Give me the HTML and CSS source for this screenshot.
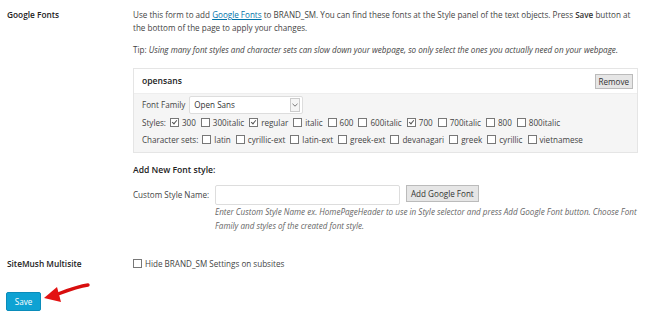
FILE: index.html
```html
<!DOCTYPE html>
<html>
<head>
    <title>Settings</title>
    <link rel="stylesheet" href="styles.css">
</head>
<body>
    <div class="wrap">
        <div class="row">
            <div class="label">Google Fonts</div>
            <div class="field">
                <p class="desc">Use this form to add <a href="#">Google Fonts</a> to BRAND_SM. You can find these fonts at the Style panel of the text objects. Press <b>Save</b> button at<br>the bottom of the page to apply your changes.</p>
                <p class="tip">Tip: <i>Using many font styles and character sets can slow down your webpage, so only select the ones you actually need on your webpage.</i></p>

                <div class="fontbox">
                    <div class="fontbox-head">
                        <span class="fontbox-title">opensans</span>
                        <button class="btn-small">Remove</button>
                    </div>
                    <div class="fontbox-body">
                        <div class="line">
                            <span class="lbl">Font Family</span>
                            <div class="select">
                                <span>Open Sans</span>
                                <span class="select-arrow">
                                    <svg width="6" height="4" viewBox="0 0 6 4"><path d="M0.5 0.8 L3 3.2 L5.5 0.8" fill="none" stroke="#777" stroke-width="1"/></svg>
                                </span>
                            </div>
                        </div>
                        <div class="line opts">
                            <span class="lbl">Styles:</span>
                            <span class="opt"><span class="cb on"></span>300</span>
                            <span class="opt"><span class="cb"></span>300italic</span>
                            <span class="opt"><span class="cb on"></span>regular</span>
                            <span class="opt"><span class="cb"></span>italic</span>
                            <span class="opt"><span class="cb"></span>600</span>
                            <span class="opt"><span class="cb"></span>600italic</span>
                            <span class="opt"><span class="cb on"></span>700</span>
                            <span class="opt"><span class="cb"></span>700italic</span>
                            <span class="opt"><span class="cb"></span>800</span>
                            <span class="opt"><span class="cb"></span>800italic</span>
                        </div>
                        <div class="line opts">
                            <span class="lbl">Character sets:</span>
                            <span class="opt"><span class="cb"></span>latin</span>
                            <span class="opt"><span class="cb"></span>cyrillic-ext</span>
                            <span class="opt"><span class="cb"></span>latin-ext</span>
                            <span class="opt"><span class="cb"></span>greek-ext</span>
                            <span class="opt"><span class="cb"></span>devanagari</span>
                            <span class="opt"><span class="cb"></span>greek</span>
                            <span class="opt"><span class="cb"></span>cyrillic</span>
                            <span class="opt"><span class="cb"></span>vietnamese</span>
                        </div>
                    </div>
                </div>

                <h4 class="subhead">Add New Font style:</h4>
                <div class="addrow">
                    <span class="lbl">Custom Style Name:</span>
                    <div class="addfield">
                        <div class="addinputs">
                            <input type="text" class="text-input">
                            <button class="btn-small btn-add">Add Google Font</button>
                        </div>
                        <p class="help">Enter Custom Style Name ex. HomePageHeader to use in Style selector and press Add Google Font button. Choose Font Family and styles of the created font style.</p>
                    </div>
                </div>
            </div>
        </div>

        <div class="row row-multi">
            <div class="label">SiteMush Multisite</div>
            <div class="field">
                <span class="opt"><span class="cb"></span>Hide BRAND_SM Settings on subsites</span>
            </div>
        </div>

        <div class="submit">
            <button class="btn-save">Save</button>
            <svg class="arrow" width="48" height="24" viewBox="0 0 48 24">
                <path d="M45 4 C37 5 28 8 15 13" fill="none" stroke="#d80e0e" stroke-width="3.4" stroke-linecap="round"/>
                <path d="M1 17 L14 6 L18 21 Z" fill="#e31212"/>
            </svg>
        </div>
    </div>
</body>
</html>
```

FILE: styles.css
```css
body {
    margin: 0;
    padding: 0;
    background: #fff;
    font-family: "Open Sans", "Liberation Sans", sans-serif;
    font-size: 8.1px;
    color: #444;
}

.wrap {
    padding: 9px 0 0 7px;
    position: relative;
}

.row {
    display: flex;
}

.label {
    width: 126px;
    flex: none;
    font-weight: 600;
    color: #222;
    font-size: 8.3px;
}

.field {
    width: 505px;
}

p {
    margin: 0;
}

.desc {
    white-space: nowrap;
    line-height: 12.5px;
}

.desc a {
    color: #0073aa;
}

.desc b {
    font-weight: 600;
    color: #333;
}

.tip {
    margin-top: 10px;
    line-height: 12px;
}

.fontbox {
    margin-top: 12px;
    border: 1px solid #e5e5e5;
}

.fontbox-head {
    display: flex;
    justify-content: space-between;
    align-items: center;
    height: 24px;
    padding: 0 4px 0 8px;
    border-bottom: 1px solid #eee;
}

.fontbox-title {
    font-weight: 600;
    color: #222;
    font-size: 8.6px;
}

.btn-small {
    font-family: "Open Sans", "Liberation Sans", sans-serif;
    font-size: 8.1px;
    color: #333;
    background: #e6e6e6;
    border: 1px solid #bbb;
    padding: 1px 3px;
    line-height: 11px;
}

.fontbox-body {
    background: #f5f5f5;
    padding: 1px 8px 4px;
    white-space: nowrap;
}

.line {
    display: flex;
    align-items: center;
    height: 17px;
}

.line:first-child {
    height: 19px;
}

.lbl {
    margin-right: 4px;
    white-space: nowrap;
}

.select {
    display: flex;
    align-items: center;
    justify-content: space-between;
    width: 108px;
    height: 16px;
    background: #fff;
    border: 1px solid #ddd;
    border-radius: 2px;
    padding-left: 4px;
    color: #333;
}

.select-arrow {
    width: 8px;
    height: 12px;
    margin-right: 2px;
    border: 1px solid #ccc;
    display: flex;
    align-items: center;
    justify-content: center;
    background: #f5f5f5;
}

.opts .lbl {
    margin-right: 4px;
}

.opt {
    display: inline-flex;
    align-items: center;
    margin-right: 5px;
    white-space: nowrap;
}

.cb {
    width: 7px;
    height: 7px;
    border: 1px solid #777;
    margin-right: 3px;
    position: relative;
    background: #fff;
}

.cb.on::after {
    content: "";
    position: absolute;
    left: 2px;
    top: 0;
    width: 2px;
    height: 4px;
    border: solid #555;
    border-width: 0 1px 1px 0;
    transform: rotate(40deg);
}

.subhead {
    margin: 11px 0 0;
    font-size: 8.6px;
    font-weight: 600;
    color: #222;
}

.addrow {
    display: flex;
    margin-top: 9px;
}

.addrow > .lbl {
    width: 82px;
    margin-right: 0;
    flex: none;
    padding-top: 4px;
}

.addinputs {
    display: flex;
    align-items: flex-start;
}

.text-input {
    width: 185px;
    height: 20px;
    box-sizing: border-box;
    border: 1px solid #ddd;
    border-radius: 2px;
    margin: 0 6px 0 0;
    padding: 0;
}

.btn-add {
    height: 17px;
    padding: 0 4px;
}

.help {
    font-style: italic;
    color: #666;
    line-height: 14px;
    margin-top: 0;
}

.row-multi {
    margin-top: 25px;
}

.submit {
    margin-top: 22px;
    position: relative;
    margin-left: -1px;
}

.btn-save {
    font-family: "Open Sans", "Liberation Sans", sans-serif;
    font-size: 8.1px;
    color: #fff;
    background: #0ea2d3;
    border: 1px solid #0a8cba;
    border-radius: 2px;
    width: 35px;
    height: 19px;
    padding: 0;
}

.arrow {
    position: absolute;
    left: 37px;
    top: -11px;
}
```
